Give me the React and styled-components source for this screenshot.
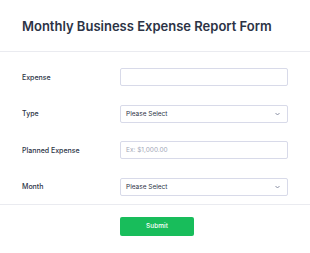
import React from 'react'
import styled, { createGlobalStyle } from 'styled-components'

const GlobalStyle = createGlobalStyle`
  html, body {
    margin: 0;
    padding: 0;
    background: #fff;
  }
  body {
    font-family: Inter, "Noto Sans", sans-serif;
    color: #2c3345;
  }
`

const Page = styled.div`
  width: 310px;
  height: 253px;
  background: #fff;
  overflow: hidden;
`

const Header = styled.div`
  height: 52px;
  padding: 0 22px;
  display: flex;
  align-items: center;
  border-bottom: 1px solid #eaebf0;
  box-sizing: border-box;
`

const Title = styled.h1`
  margin: 0;
  font-size: 13px;
  font-weight: 600;
  color: #2c3345;
  white-space: nowrap;
`

const Fields = styled.div`
  display: flex;
  flex-direction: column;
  gap: 18.5px;
  padding: 16px 22px 8px 22px;
  border-bottom: 1px solid #eaebf0;
`

const Row = styled.div`
  display: grid;
  grid-template-columns: 98px 168px;
  align-items: center;
  height: 18px;
`

const Label = styled.label`
  font-size: 7px;
  font-weight: 500;
  color: #2c3345;
`

const Box = styled.div`
  height: 18px;
  box-sizing: border-box;
  border: 1px solid #d8dae9;
  border-radius: 2px;
  background: #fff;
  display: flex;
  align-items: center;
  justify-content: space-between;
  padding: 0 5px;
  font-size: 6.5px;
  color: ${({ $placeholder }) => ($placeholder ? '#a3a7b8' : '#2c3345')};
`

const Caret = styled.svg`
  width: 5px;
  height: 4px;
  margin-right: 2px;
`

const Footer = styled.div`
  padding: 12px 0 0 120px;
`

const Submit = styled.button`
  display: block;
  width: 74px;
  height: 19px;
  border: none;
  border-radius: 2px;
  background: #18bd5b;
  color: #fff;
  font-family: Inter, "Noto Sans", sans-serif;
  font-size: 6.5px;
  font-weight: 500;
  padding: 0;
`

const Select = ({ text }) => (
  <Box>
    <span>{text}</span>
    <Caret viewBox="0 0 10 6">
      <path d="M1 1 L5 5 L9 1" fill="none" stroke="#6f7690" strokeWidth="1.6" />
    </Caret>
  </Box>
)

const fields = [
  { label: 'Expense', kind: 'input', text: '' },
  { label: 'Type', kind: 'select', text: 'Please Select' },
  { label: 'Planned Expense', kind: 'input', text: 'Ex: $1,000.00', placeholder: true },
  { label: 'Month', kind: 'select', text: 'Please Select' },
]

export default function App() {
  return (
    <Page>
      <GlobalStyle />
      <Header>
        <Title>Monthly Business Expense Report Form</Title>
      </Header>
      <Fields>
        {fields.map((f) => (
          <Row key={f.label}>
            <Label>{f.label}</Label>
            {f.kind === 'select' ? (
              <Select text={f.text} />
            ) : (
              <Box $placeholder={f.placeholder}>{f.text}</Box>
            )}
          </Row>
        ))}
      </Fields>
      <Footer>
        <Submit>Submit</Submit>
      </Footer>
    </Page>
  )
}
